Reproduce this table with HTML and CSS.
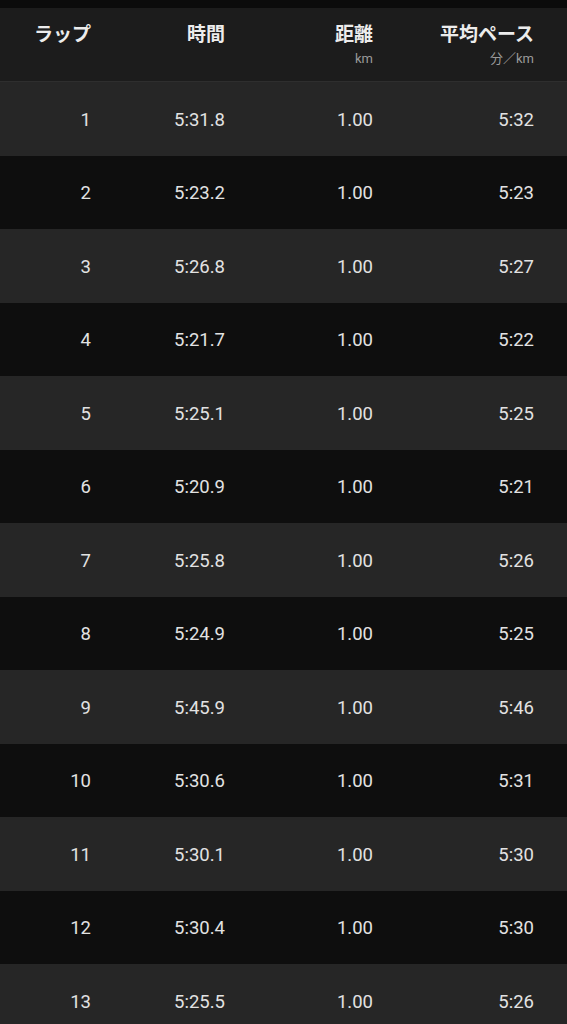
FILE: index.html
```html
<!DOCTYPE html>
<html lang="ja">
<head>
	<meta charset="UTF-8">
	<title>ラップ</title>
	<link rel="stylesheet" href="styles.css">
</head>
<body>
	<div class="topbar"></div>
	<div class="laps">
		<div class="head">
			<div class="cell"><span class="label">ラップ</span></div>
			<div class="cell"><span class="label">時間</span></div>
			<div class="cell"><span class="label">距離</span><span class="unit">km</span></div>
			<div class="cell"><span class="label">平均ペース</span><span class="unit">分／km</span></div>
		</div>
		<ul class="rows">
			<li><span>1</span><span>5:31.8</span><span>1.00</span><span>5:32</span></li>
			<li><span>2</span><span>5:23.2</span><span>1.00</span><span>5:23</span></li>
			<li><span>3</span><span>5:26.8</span><span>1.00</span><span>5:27</span></li>
			<li><span>4</span><span>5:21.7</span><span>1.00</span><span>5:22</span></li>
			<li><span>5</span><span>5:25.1</span><span>1.00</span><span>5:25</span></li>
			<li><span>6</span><span>5:20.9</span><span>1.00</span><span>5:21</span></li>
			<li><span>7</span><span>5:25.8</span><span>1.00</span><span>5:26</span></li>
			<li><span>8</span><span>5:24.9</span><span>1.00</span><span>5:25</span></li>
			<li><span>9</span><span>5:45.9</span><span>1.00</span><span>5:46</span></li>
			<li><span>10</span><span>5:30.6</span><span>1.00</span><span>5:31</span></li>
			<li><span>11</span><span>5:30.1</span><span>1.00</span><span>5:30</span></li>
			<li><span>12</span><span>5:30.4</span><span>1.00</span><span>5:30</span></li>
			<li><span>13</span><span>5:25.5</span><span>1.00</span><span>5:26</span></li>
		</ul>
	</div>
</body>
</html>
```

FILE: styles.css
```css
html, body, ul, li {
	margin: 0;
	padding: 0;
}

body {
	background: #0d0d0d;
	color: #e2e2e2;
	font-family: Roboto, "Noto Sans CJK JP", sans-serif;
	overflow: hidden;
}

ul {
	list-style: none;
}

.topbar {
	height: 8px;
	background: #0b0b0b;
}

.head,
.rows li {
	display: grid;
	grid-template-columns: 91px 134px 148px 161px;
	padding-right: 33px;
}

.head {
	height: 73px;
	background: #1c1c1c;
	border-bottom: 1px solid #2e2e2e;
}

.head .cell {
	display: flex;
	flex-direction: column;
	align-items: flex-end;
	padding-top: 15px;
}

.head .label {
	font-size: 19px;
	font-weight: bold;
	line-height: 24px;
	color: #ececec;
}

.head .unit {
	font-size: 13px;
	line-height: 16px;
	margin-top: 4px;
	color: #9a9a9a;
}

.rows li {
	box-sizing: border-box;
	height: 73.5px;
	padding-top: 2px;
	align-items: center;
	font-size: 18.5px;
	background: #262626;
}

.rows li:nth-child(even) {
	background: #0e0e0e;
}

.rows span {
	text-align: right;
}
```
